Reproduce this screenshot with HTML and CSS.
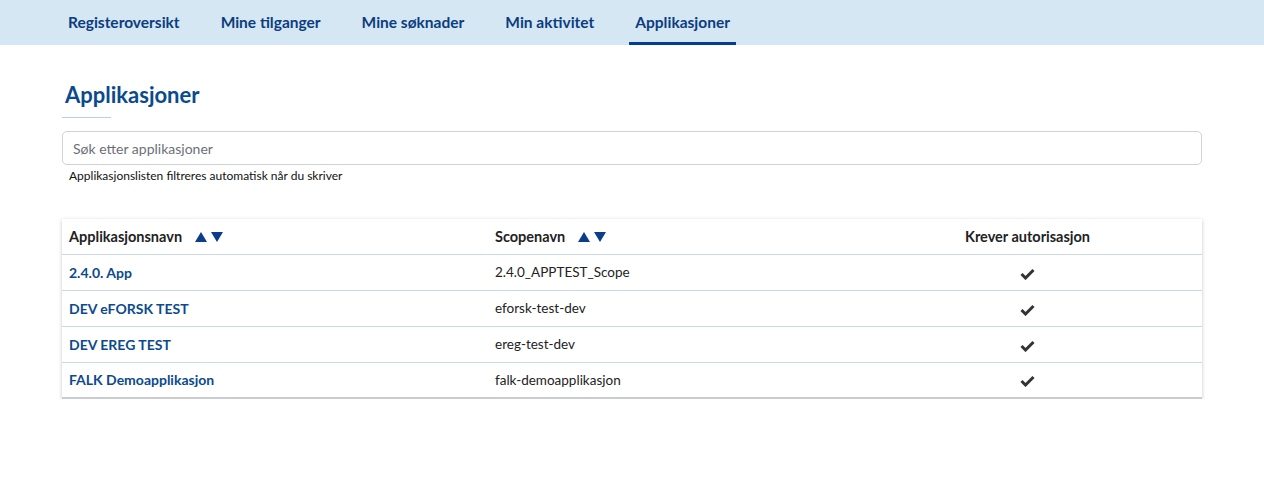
FILE: index.html
```html
<!DOCTYPE html>
<html lang="no">
<head>
<meta charset="utf-8">
<title>Applikasjoner</title>
<link rel="stylesheet" href="styles.css">
</head>
<body>
<nav class="topnav">
  <ul class="tabs">
    <li class="tab">Registeroversikt</li>
    <li class="tab">Mine tilganger</li>
    <li class="tab">Mine søknader</li>
    <li class="tab">Min aktivitet</li>
    <li class="tab active">Applikasjoner</li>
  </ul>
</nav>
<main class="content">
  <h1 class="title">Applikasjoner</h1>
  <div class="search">
    <input class="search-input" type="text" placeholder="Søk etter applikasjoner">
    <p class="help">Applikasjonslisten filtreres automatisk når du skriver</p>
  </div>
  <table class="apps">
    <thead>
      <tr>
        <th class="col-name">Applikasjonsnavn <span class="sort"><svg width="30" height="12" viewBox="0 0 30 12"><path d="M1 11 L7 1 L13 11 Z" fill="#0b3d8a"/><path d="M17 1 L29 1 L23 11 Z" fill="#0b3d8a"/></svg></span></th>
        <th class="col-scope">Scopenavn <span class="sort"><svg width="30" height="12" viewBox="0 0 30 12"><path d="M1 11 L7 1 L13 11 Z" fill="#0b3d8a"/><path d="M17 1 L29 1 L23 11 Z" fill="#0b3d8a"/></svg></span></th>
        <th class="col-auth">Krever autorisasjon</th>
      </tr>
    </thead>
    <tbody>
      <tr><td class="name">2.4.0. App</td><td>2.4.0_APPTEST_Scope</td><td class="check"><svg width="15" height="12" viewBox="0 0 15 12"><path d="M1.5 6 L5.5 10 L13.5 2" fill="none" stroke="#333" stroke-width="3"/></svg></td></tr>
      <tr><td class="name">DEV eFORSK TEST</td><td>eforsk-test-dev</td><td class="check"><svg width="15" height="12" viewBox="0 0 15 12"><path d="M1.5 6 L5.5 10 L13.5 2" fill="none" stroke="#333" stroke-width="3"/></svg></td></tr>
      <tr><td class="name">DEV EREG TEST</td><td>ereg-test-dev</td><td class="check"><svg width="15" height="12" viewBox="0 0 15 12"><path d="M1.5 6 L5.5 10 L13.5 2" fill="none" stroke="#333" stroke-width="3"/></svg></td></tr>
      <tr><td class="name">FALK Demoapplikasjon</td><td>falk-demoapplikasjon</td><td class="check"><svg width="15" height="12" viewBox="0 0 15 12"><path d="M1.5 6 L5.5 10 L13.5 2" fill="none" stroke="#333" stroke-width="3"/></svg></td></tr>
    </tbody>
  </table>
</main>
</body>
</html>
```
FILE: styles.css
```css
* { box-sizing: border-box; }
body {
  margin: 0;
  font-family: "Lato", "Open Sans", sans-serif;
  color: #222;
  background: #fff;
}
.topnav {
  background: #d6e7f4;
  height: 45px;
}
.tabs {
  list-style: none;
  margin: 0;
  padding: 0 0 0 48px;
  display: flex;
  height: 45px;
}
.tab {
  margin: 0 14.5px;
  padding: 0 6px;
  height: 45px;
  line-height: 44px;
  font-size: 15.5px;
  font-weight: 700;
  color: #0b3d80;
  border-bottom: 3px solid transparent;
}
.tab:first-child { margin-left: 14px; }
.tab.active {
  border-bottom-color: #043e94;
}
.content {
  padding: 0 62px;
}
.title {
  margin: 36px 0 0 3px;
  font-size: 22px;
  font-weight: 700;
  color: #0a4a8e;
  line-height: 28px;
  display: inline-block;
  padding-bottom: 7px;
}
.title::after {
  content: "";
  display: block;
  width: 49px;
  height: 1px;
  background: #b8cfe6;
  margin: 8px 0 0 -3px;
}
.search { margin-top: 6px; }
.search-input {
  display: block;
  width: 100%;
  height: 34px;
  border: 1px solid #cfd3d8;
  border-radius: 5px;
  padding: 0 10px;
  font-family: inherit;
  font-size: 14px;
  color: #333;
}
.search-input::placeholder { color: #6c7077; }
.help {
  margin: 3px 0 0 7px;
  font-size: 12px;
  color: #111;
}
.apps {
  width: 100%;
  margin-top: 36px;
  border-collapse: collapse;
  box-shadow: 0 1px 4px rgba(0,0,0,0.22);
  font-size: 14px;
  table-layout: fixed;
}
.apps th {
  height: 35px;
  text-align: left;
  font-weight: 700;
  font-size: 14.5px;
  color: #222;
  padding: 0 7px;
  border-bottom: 1px solid #c9d9e6;
}
.apps td {
  height: 36px;
  padding: 0 7px;
  border-bottom: 1px solid #c9d9e6;
  color: #222;
  font-size: 13.5px;
}
.apps tbody tr:last-child td { border-bottom: 2px solid #c8ccd0; }
.col-name { width: 426px; }
.col-scope { width: 365px; }
.apps th.col-auth, .apps td.check { text-align: center; }
.sort { display: inline-block; margin-left: 8px; vertical-align: -1px; }
.sort svg { display: block; }
.apps td.name { color: #0b4a8e; font-weight: 700; font-size: 14px; }
.check svg { display: inline-block; vertical-align: middle; }
```
